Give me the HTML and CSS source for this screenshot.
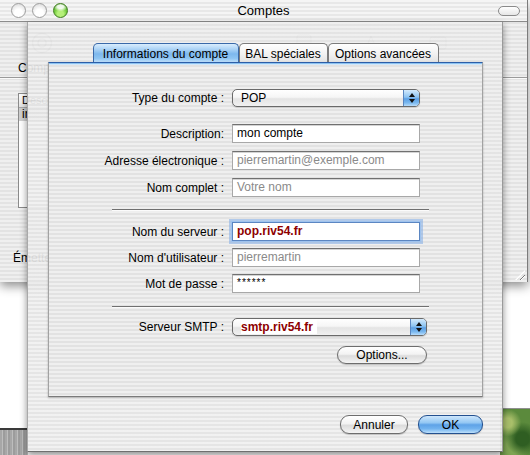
FILE: index.html
```html
<!DOCTYPE html>
<html lang="fr">
<head>
<meta charset="utf-8">
<title>Comptes</title>
<link rel="stylesheet" href="styles.css">
</head>
<body>
<div class="screen">
  <div class="desk-left"></div>
  <div class="desk-right"></div>

  <div class="backwin">
    <div class="titlebar">
      <div class="lights">
        <span class="light off"></span>
        <span class="light off"></span>
        <span class="light zoom"></span>
      </div>
      <div class="title">Comptes</div>
      <span class="pill"></span>
    </div>
    <div class="toolbar">
      <div class="tool">
        <svg class="tool-icon" width="22" height="22" viewBox="0 0 22 22"><circle cx="11" cy="11" r="9.5" fill="#e2e2e2" stroke="#9a9a9a" stroke-width="1.4"/><circle cx="11" cy="11" r="4" fill="none" stroke="#9a9a9a" stroke-width="1.6"/></svg>
        <span class="tool-label">Comptes</span>
      </div>
      <div class="tool far">
        <svg class="tool-icon" width="22" height="22" viewBox="0 0 22 22"><rect x="4" y="3" width="14" height="16" rx="2" fill="#dcdcdc" stroke="#a0a0a0"/></svg>
        <span class="tool-label">Règles</span>
      </div>
      <div class="tool">
        <svg class="tool-icon" width="22" height="22" viewBox="0 0 22 22"><path d="M5 18 L11 4 L17 18 Z" fill="#dcdcdc" stroke="#a0a0a0"/></svg>
        <span class="tool-label">Polices</span>
      </div>
      <div class="tool">
        <svg class="tool-icon" width="22" height="22" viewBox="0 0 22 22"><rect x="3" y="5" width="16" height="12" rx="2" fill="#dcdcdc" stroke="#a0a0a0"/></svg>
        <span class="tool-label">Affichage</span>
      </div>
    </div>
    <div class="prefbody">
      <div class="list">
        <div class="list-head">Description</div>
        <div class="list-row sel">ir</div>
      </div>
      <div class="emet">Émetteur</div>
    </div>
    <span class="grip"></span>
  </div>

  <div class="sheet">
    <div class="tabs">
      <div class="tab sel t1">Informations du compte</div>
      <div class="tab t2">BAL spéciales</div>
      <div class="tab t3">Options avancées</div>
    </div>
    <div class="panel">
      <div class="group g0">
        <label class="lbl">Type du compte :</label>
        <div class="popup w188">
          <span class="popup-text">POP</span>
          <span class="popup-arrows"><svg width="8" height="12" viewBox="0 0 8 12"><path d="M4 1 L7 5 L1 5 Z M4 11 L7 7 L1 7 Z" fill="#111"/></svg></span>
        </div>
      </div>

      <div class="group g1">
        <label class="lbl">Description:</label>
        <div class="field">mon compte</div>
        <label class="lbl">Adresse électronique :</label>
        <div class="field ph">pierremartin@exemple.com</div>
        <label class="lbl">Nom complet :</label>
        <div class="field ph">Votre nom</div>
      </div>

      <div class="sep s1"></div>

      <div class="group g2">
        <label class="lbl">Nom du serveur :</label>
        <div class="field focus">pop.riv54.fr</div>
        <label class="lbl">Nom d'utilisateur :</label>
        <div class="field ph">pierremartin</div>
        <label class="lbl">Mot de passe :</label>
        <div class="field pw">******</div>
      </div>

      <div class="sep s2"></div>

      <div class="group g3">
        <label class="lbl">Serveur SMTP :</label>
        <div class="popup w195">
          <span class="popup-text red"><span class="hl">smtp.riv54.fr</span></span>
          <span class="popup-arrows"><svg width="8" height="12" viewBox="0 0 8 12"><path d="M4 1 L7 5 L1 5 Z M4 11 L7 7 L1 7 Z" fill="#111"/></svg></span>
        </div>
        <span></span>
        <button class="btn options">Options...</button>
      </div>
    </div>
    <div class="actions">
      <button class="btn cancel">Annuler</button>
      <button class="btn default ok">OK</button>
    </div>
  </div>
</div>
</body>
</html>
```

FILE: styles.css
```css
* { box-sizing: border-box; }
html, body { margin: 0; padding: 0; }
body {
  width: 530px;
  height: 455px;
  overflow: hidden;
  background: #fff;
  font-family: "Liberation Sans", Arial, sans-serif;
  font-size: 12px;
  color: #000;
}
.screen {
  position: relative;
  width: 530px;
  height: 455px;
  overflow: hidden;
  background: #fff;
}

/* desktop glimpses */
.desk-left {
  position: absolute;
  left: 0;
  top: 428px;
  width: 28px;
  height: 27px;
  border-top: 2px solid #3a3a3a;
  background: repeating-linear-gradient(90deg, #a7a7a7 0 2px, #bdbdbd 2px 3px, #9c9c9c 3px 5px);
}
.desk-right {
  position: absolute;
  left: 500px;
  top: 408px;
  width: 30px;
  height: 47px;
  border-top: 1px solid #8f8f8f;
  background:
    radial-gradient(circle at 25% 30%, #a9bf6a 0 12%, transparent 35%),
    radial-gradient(circle at 75% 65%, #2f5e22 0 18%, transparent 45%),
    radial-gradient(circle at 40% 85%, #7ea452 0 15%, transparent 40%),
    #5b8a3c;
}

/* background window */
.backwin {
  position: absolute;
  left: 0;
  top: 0;
  width: 528px;
  height: 282px;
  border-right: 1px solid #7c7c7c;
  box-shadow: 0 4px 10px rgba(0, 0, 0, .45);
  background: repeating-linear-gradient(#efefef 0 2px, #e3e3e3 2px 4px);
}
.titlebar {
  height: 22px;
  display: grid;
  grid-template-columns: 1fr auto 1fr;
  align-items: center;
  border-bottom: 1px solid #8c8c8c;
  background: repeating-linear-gradient(#f5f5f5 0 2px, #e8e8e8 2px 4px);
}
.lights {
  display: flex;
  gap: 6px;
  padding-left: 11px;
}
.light {
  width: 15px;
  height: 15px;
  border-radius: 50%;
}
.light.off {
  border: 1px solid #9d9d9d;
  background: radial-gradient(circle at 50% 70%, #ffffff 0 35%, #e4e4e4 75%, #cfcfcf 100%);
}
.light.zoom {
  border: 1px solid #3f7d1f;
  background:
    radial-gradient(ellipse 55% 35% at 50% 22%, rgba(255,255,255,.9) 0 40%, transparent 100%),
    radial-gradient(circle at 50% 75%, #b6f07a 0 25%, #6fc93a 55%, #3d8e1c 100%);
}
.title {
  font-size: 13px;
  color: #000;
}
.pill {
  justify-self: end;
  margin-right: 7px;
  width: 22px;
  height: 10px;
  border-radius: 5px;
  border: 1px solid #8a8a8a;
  background: linear-gradient(#ffffff, #e6e6e6);
}

.toolbar {
  height: 56px;
  display: flex;
  padding-left: 18px;
  border-bottom: 1px solid #9a9a9a;
  box-shadow: 0 1px 0 #fafafa;
}
.tool {
  width: 48px;
  display: flex;
  flex-direction: column;
  align-items: center;
  padding-top: 10px;
  gap: 8px;
}
.tool.far { margin-left: 214px; }
.tool + .tool:not(.far) { margin-left: 19px; }
.tool-label { font-size: 12px; line-height: 13px; }

.prefbody {
  padding: 15px 0 0 13px;
}
.list {
  margin-left: 5px;
  width: 240px;
  height: 115px;
  border: 1px solid #8a8a8a;
  background: #fff;
}
.list-head {
  height: 14px;
  padding-left: 3px;
  font-size: 11px;
  line-height: 13px;
  border-bottom: 1px solid #a8a8a8;
  background: linear-gradient(#ffffff, #e4e4e4);
}
.list-row {
  height: 13px;
  padding-left: 3px;
  font-size: 12px;
  line-height: 13px;
}
.list-row.sel { background: #cfcfcf; }
.emet {
  margin-top: 43px;
  font-size: 12px;
  line-height: 14px;
}
.grip {
  position: absolute;
  right: 2px;
  bottom: 2px;
  width: 10px;
  height: 10px;
  background: repeating-linear-gradient(135deg, transparent 0 2px, #7a7a7a 2px 3px, #fff 3px 4px);
  clip-path: polygon(100% 0, 100% 100%, 0 100%);
}

/* sheet */
.sheet {
  position: absolute;
  left: 27px;
  top: 22px;
  width: 476px;
  height: 430px;
  padding: 21px 19px 0 20px;
  border-left: 1px solid #a9a9a9;
  border-right: 1px solid #9a9a9a;
  border-bottom: 1px solid #6f6f6f;
  background: repeating-linear-gradient(rgba(240,240,240,.93) 0 2px, rgba(227,227,227,.93) 2px 4px);
  box-shadow: 0 3px 7px rgba(0, 0, 0, .45);
  display: flex;
  flex-direction: column;
}

.tabs {
  display: flex;
  justify-content: center;
  height: 19px;
}
.tab {
  height: 19px;
  border: 1px solid #7b7b7b;
  border-bottom: none;
  border-radius: 5px 5px 0 0;
  background: linear-gradient(#ffffff 0%, #f3f3f3 50%, #e3e3e3 100%);
  display: flex;
  align-items: center;
  justify-content: center;
  font-size: 12px;
  padding-top: 1px;
}
.tab.t1 { width: 146px; }
.tab.t2 { width: 89px; }
.tab.t3 { width: 111px; }
.tab.sel {
  border-color: #3a69a8;
  background: linear-gradient(#d9edfd 0%, #aad2f5 30%, #7db8ed 55%, #8ec5f2 80%, #bfe0fb 100%);
}

.panel {
  width: 435px;
  height: 335px;
  border: 1px solid #a2a2a2;
  border-top: 1px solid #2c5ea8;
  border-bottom-color: #7a7a7a;
  box-shadow: inset 0 1px 0 #8cc2ef, inset 0 2px 0 #d2e8fb, 0 1px 2px rgba(0, 0, 0, .25);
  background: repeating-linear-gradient(#efefef 0 2px, #e2e2e2 2px 4px);
  padding-top: 26px;
  display: flex;
  flex-direction: column;
}

.group {
  display: grid;
  grid-template-columns: 175px 195px;
  column-gap: 8px;
  align-items: center;
}
.g0 { height: 18px; }
.g1 { margin-top: 17px; row-gap: 8px; grid-auto-rows: 19px; }
.g2 { margin-top: 12px; row-gap: 7px; grid-auto-rows: 19px; }
.g3 { margin-top: 11px; row-gap: 10px; grid-auto-rows: 18px; }

.lbl {
  text-align: right;
  font-size: 12px;
  white-space: nowrap;
}

.sep {
  margin-left: 63px;
  width: 317px;
  height: 1px;
  background: #707070;
  box-shadow: 0 1px 0 #fbfbfb;
}
.s1 { margin-top: 12px; }
.s2 { margin-top: 13px; }

.field {
  width: 188px;
  height: 19px;
  border: 1px solid #a8a8a8;
  border-top-color: #707070;
  background: #fff;
  box-shadow: inset 0 1px 0 #d4d4d4;
  padding-left: 4px;
  font-size: 12px;
  line-height: 17px;
  white-space: nowrap;
  overflow: hidden;
}
.field.ph { color: #8a8a8a; }
.field.pw { font-size: 10px; line-height: 15px; letter-spacing: 1px; }
.field.focus {
  border-color: #5b86c2;
  box-shadow: 0 0 0 1px #9fc3ee, 0 0 0 3px rgba(128, 172, 230, .55);
  color: #8e0000;
  font-weight: bold;
}

.popup {
  display: flex;
  height: 18px;
  border: 1px solid #6a6a6a;
  border-radius: 5px;
  overflow: hidden;
  background: linear-gradient(#ffffff 0%, #f6f6f6 45%, #e4e4e4 55%, #f1f1f1 100%);
  box-shadow: 0 1px 1px rgba(0, 0, 0, .15);
}
.w188 { width: 188px; }
.w195 { width: 195px; }
.popup-text {
  flex: 1;
  padding-left: 8px;
  line-height: 16px;
  font-size: 12px;
}
.popup-text.red {
  color: #8e0000;
  font-weight: bold;
}
.hl {
  background: #fff;
  padding-right: 4px;
}
.popup-arrows {
  width: 16px;
  display: flex;
  align-items: center;
  justify-content: center;
  border-left: 1px solid #5a86c0;
  background: linear-gradient(#d4eafc 0%, #8cc3f1 45%, #5c9fe4 55%, #7ab8ef 80%, #b8dcfa 100%);
}

.btn {
  font-family: "Liberation Sans", Arial, sans-serif;
  font-size: 12px;
  color: #000;
  height: 18px;
  padding: 0;
  border-radius: 9px;
  border: 1px solid #6d6d6d;
  background: linear-gradient(#ffffff 0%, #f3f3f3 45%, #dcdcdc 55%, #f4f4f4 100%);
  box-shadow: 0 1px 1px rgba(0, 0, 0, .2);
  line-height: 16px;
  text-align: center;
}
.options { grid-column: 2; justify-self: end; width: 90px; }
.actions {
  display: flex;
  justify-content: flex-end;
  gap: 10px;
  margin-top: 18px;
}
.cancel { width: 68px; height: 19px; }
.ok { width: 65px; height: 19px; }
.btn.default {
  border-color: #23508f;
  background: linear-gradient(#cde6fc 0%, #93c7f3 40%, #5ea2e7 52%, #72b3ef 75%, #bde0fb 100%);
}
```
